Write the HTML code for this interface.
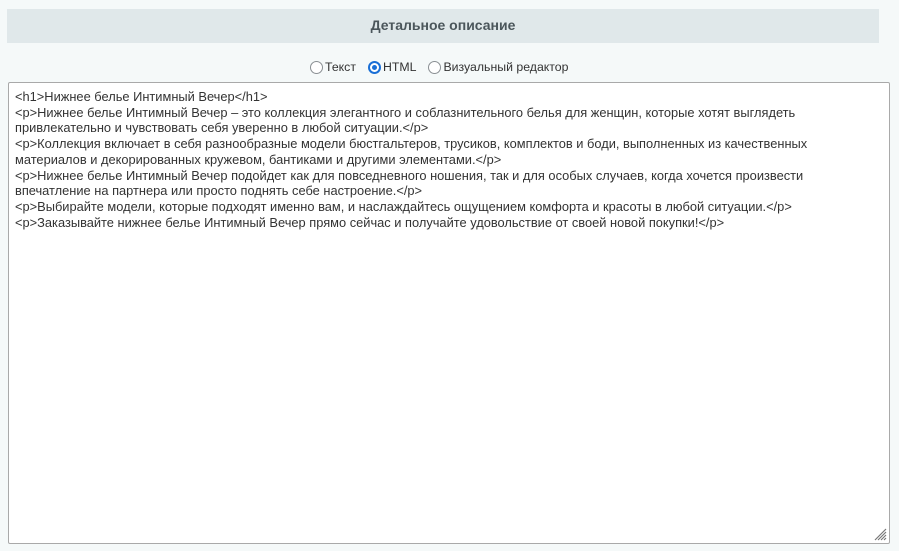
<!DOCTYPE html>
<html><head><meta charset="utf-8"><style>
body{margin:0;width:899px;height:551px;background:#f5f9f9;font-family:"Liberation Sans",Arial,sans-serif;overflow:hidden;position:relative}
.hdr{position:absolute;left:7px;top:9px;width:872px;height:34px;background:#e0e8ea;text-align:center;line-height:32px;font-size:14px;font-weight:bold;color:#4b565b}
.radios{position:absolute;top:60px;left:310px;font-size:12.3px;color:#333;white-space:nowrap}
.r{display:inline-block;border:1px solid #8a8f93;border-radius:50%;vertical-align:-3px;margin-right:2px;background:#fff;box-sizing:border-box;width:13px;height:13px}
.r.on{border:2px solid #1a6fd6;position:relative}
.r.on:after{content:"";position:absolute;left:2px;top:2px;width:5px;height:5px;border-radius:50%;background:#1a6fd6}
.lab{margin-right:12px}
.ta{position:absolute;left:8px;top:82px;width:882px;height:462px;background:#fff;border:1px solid #a9a9a9;border-radius:2px;font-size:12.85px;line-height:15.7px;color:#333;padding:6px 6px;box-sizing:border-box;white-space:nowrap}
.grip{position:absolute;right:2px;bottom:2px}
</style></head><body>
<div class="hdr">Детальное описание</div>
<div class="radios"><span class="r"></span><span class="lab">Текст</span><span class="r on"></span><span class="lab">HTML</span><span class="r"></span>Визуальный редактор</div>
<div class="ta">&lt;h1&gt;Нижнее белье Интимный Вечер&lt;/h1&gt;<br>&lt;p&gt;Нижнее белье Интимный Вечер – это коллекция элегантного и соблазнительного белья для женщин, которые хотят выглядеть<br>привлекательно и чувствовать себя уверенно в любой ситуации.&lt;/p&gt;<br>&lt;p&gt;Коллекция включает в себя разнообразные модели бюстгальтеров, трусиков, комплектов и боди, выполненных из качественных<br>материалов и декорированных кружевом, бантиками и другими элементами.&lt;/p&gt;<br>&lt;p&gt;Нижнее белье Интимный Вечер подойдет как для повседневного ношения, так и для особых случаев, когда хочется произвести<br>впечатление на партнера или просто поднять себе настроение.&lt;/p&gt;<br>&lt;p&gt;Выбирайте модели, которые подходят именно вам, и наслаждайтесь ощущением комфорта и красоты в любой ситуации.&lt;/p&gt;<br>&lt;p&gt;Заказывайте нижнее белье Интимный Вечер прямо сейчас и получайте удовольствие от своей новой покупки!&lt;/p&gt;
<svg class="grip" width="14" height="14" viewBox="0 0 14 14"><path d="M13 2L2 13M13 5L5 13M13 8L8 13M13 11L11 13" stroke="#777" stroke-width="1.2"/></svg></div>
</body></html>
